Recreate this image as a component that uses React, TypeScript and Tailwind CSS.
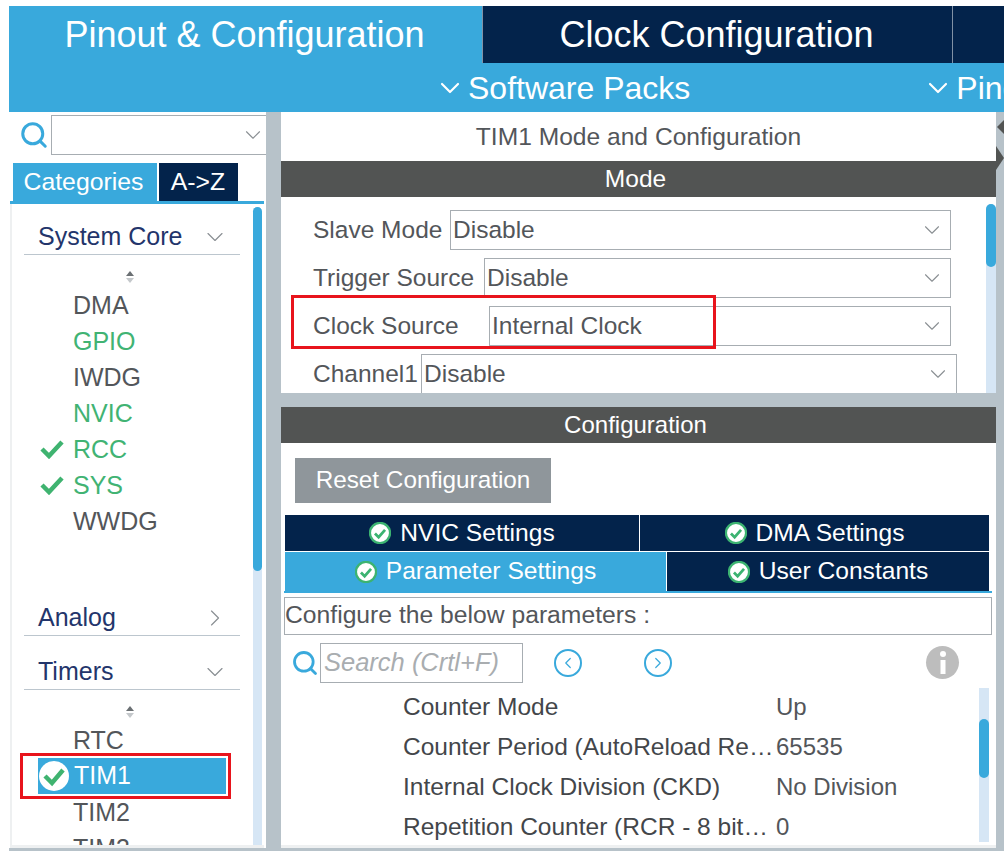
import React from 'react';
import { ChevronDown, ChevronRight, ChevronLeft, Search } from 'lucide-react';

const font = { fontFamily: '"Liberation Sans", Arial, sans-serif' };

const CheckBadge = ({ size = 20 }: { size?: number }) => (
  <svg width={size} height={size} viewBox="0 0 24 24" className="shrink-0">
    <circle cx="12" cy="12" r="11" fill="#ffffff" stroke="#3cb371" strokeWidth="2.5" />
    <path d="M6.5 12.5l4 4 7-8" fill="none" stroke="#3cb371" strokeWidth="3" />
  </svg>
);

const SortArrows = () => (
  <div className="h-[16px] ml-[8px] flex items-center justify-center w-[212px]">
    <svg width="10" height="14" viewBox="0 0 10 14">
      <path d="M5 1l4 5H1z" fill="#6b7073" />
      <path d="M5 13l4-5H1z" fill="#c4c8cb" />
    </svg>
  </div>
);

const Tick = () => (
  <svg width="24" height="20" viewBox="0 0 24 20" className="absolute left-[-33px] top-[8px]">
    <path d="M2 10l7 7L22 3" fill="none" stroke="#3fb370" strokeWidth="4.5" />
  </svg>
);

const NavItem = ({ label, green, tick }: { label: string; green?: boolean; tick?: boolean }) => (
  <div className={`relative h-[36px] ml-[57px] leading-[36px] text-[25px] ${green ? 'text-[#41b373]' : 'text-[#53565a]'}`}>
    {tick && <Tick />}
    {label}
  </div>
);

const SectionHead = ({ label, open }: { label: string; open?: boolean }) => (
  <div className="h-[36px] ml-[8px] w-[216px] flex items-center justify-between border-b border-[#bcc6ce] pr-[11px] text-[25px] text-[#23356b]">
    <span className="pl-[14px]">{label}</span>
    {open ? (
      <ChevronDown size={28} strokeWidth={1} className="text-[#8a8f93]" />
    ) : (
      <ChevronRight size={28} strokeWidth={1} className="text-[#8a8f93]" />
    )}
  </div>
);

const ModeSelect = ({ label, labelWidth, value, wide }: { label: string; labelWidth: string; value: string; wide?: boolean }) => (
  <div className={`flex items-center h-[40px] pl-[32px] text-[24.5px] text-[#53565a] ${wide ? 'pr-[29px]' : 'pr-[35px]'}`}>
    <span className={`shrink-0 ${labelWidth}`}>{label}</span>
    <div className="flex-1 h-[40px] border-[1.5px] border-[#a7adb2] flex items-center justify-between pr-[5px] pl-[2px]">
      <span>{value}</span>
      <ChevronDown size={26} strokeWidth={1} className="text-[#8a8f93]" />
    </div>
  </div>
);

const SettingTab = ({ label, active, className }: { label: string; active?: boolean; className: string }) => (
  <div className={`flex items-center justify-center gap-[9px] text-[24.6px] text-white ${active ? 'bg-[#39a9dc]' : 'bg-[#03234b]'} ${className}`}>
    <CheckBadge size={22} />
    <span>{label}</span>
  </div>
);

const ParamRow = ({ name, value }: { name: string; value: string }) => (
  <div className="flex h-[40px] items-center text-[24px] text-[#53565a]">
    <span className="w-[373px] shrink-0 whitespace-nowrap text-[24.5px] text-[#43464a]">{name}</span>
    <span>{value}</span>
  </div>
);

export default function App() {
  return (
    <div style={font} className="w-[1004px] h-[851px] bg-white overflow-hidden pt-[6px] pl-[9px] flex flex-col">
      {/* Top perspective tabs */}
      <div className="h-[106px] shrink-0 bg-[#39a9dc] text-white flex flex-col">
        <div className="h-[57px] flex text-[36px]">
          <div className="w-[473px] flex items-center justify-center pr-[2px]">Pinout &amp; Configuration</div>
          <div className="w-[470px] bg-[#03234b] border-l border-[#ffffff80] flex items-center justify-center pr-[2px]">Clock Configuration</div>
          <div className="flex-1 bg-[#03234b] border-l border-[#ffffff80]" />
        </div>
        <div className="flex-1 flex items-center text-[32px] whitespace-nowrap pl-[425px]">
          <ChevronDown size={32} strokeWidth={1.6} className="shrink-0" />
          <span className="ml-[2px]">Software Packs</span>
          <ChevronDown size={32} strokeWidth={1.6} className="ml-[232px] shrink-0" />
          <span className="ml-[2px]">Pinout</span>
        </div>
      </div>

      <div className="flex-1 min-h-0 flex">
        {/* Left panel */}
        <div className="w-[257px] shrink-0 flex flex-col pl-[1px]">
          <div className="h-[43px] flex items-center pt-[3px] pl-[9px]">
            <Search size={30} strokeWidth={2.4} className="text-[#39a9dc] shrink-0" />
            <div className="ml-[2px] flex-1 h-[40px] border-[1.5px] border-r-0 border-[#a7adb2] flex items-center justify-end">
              <ChevronDown size={26} strokeWidth={1} className="text-[#8a8f93]" />
            </div>
          </div>
          <div className="mt-[8px] flex h-[38px] pl-[3px] text-[24.8px] text-white shrink-0">
            <div className="w-[144px] bg-[#39a9dc] flex items-center justify-center pr-[3px]">Categories</div>
            <div className="w-[79px] ml-[2px] bg-[#03234b] flex items-center justify-center pr-[1px]">A-&gt;Z</div>
          </div>
          <div className="h-[3px] bg-[#39a9dc] w-[254px] shrink-0" />
          <div className="flex-1 min-h-0 w-[254px] border-l-[2px] border-b-[3px] border-[#eef0f1] flex pl-[4px] overflow-hidden">
            <div className="w-[237px] shrink-0 overflow-hidden pt-[15px]">
              <SectionHead label="System Core" open />
              <div className="mt-[14px]"><SortArrows /></div>
              <div className="mt-[2px]">
                <NavItem label="DMA" />
                <NavItem label="GPIO" green />
                <NavItem label="IWDG" />
                <NavItem label="NVIC" green />
                <NavItem label="RCC" green tick />
                <NavItem label="SYS" green tick />
                <NavItem label="WWDG" />
              </div>
              <div className="mt-[61px]"><SectionHead label="Analog" /></div>
              <div className="mt-[18px]"><SectionHead label="Timers" open /></div>
              <div className="mt-[14px]"><SortArrows /></div>
              <div className="mt-[2px]"><NavItem label="RTC" /></div>
              <div className="ml-[4px] w-[211px] h-[46px] border-[3px] border-[#e8141c] py-[2px] pl-[15px] pr-[2px] my-[-5px] relative">
                <div className="h-full bg-[#39a9dc] flex items-center text-[25px] text-white pl-[1px]">
                  <svg width="30" height="30" viewBox="0 0 30 30" className="shrink-0">
                    <circle cx="15" cy="15" r="15" fill="#ffffff" />
                    <path d="M6 15l7 7L24 9" fill="none" stroke="#3fb370" strokeWidth="4.5" />
                  </svg>
                  <span className="ml-[5px]">TIM1</span>
                </div>
              </div>
              <NavItem label="TIM2" />
              <NavItem label="TIM3" />
            </div>
            <div className="w-[9px] shrink-0 mt-[3px] bg-[#d6e6f5] rounded-t-full">
              <div className="h-[364px] bg-[#39a9dc] rounded-full" />
            </div>
          </div>
        </div>

        {/* Splitter */}
        <div className="w-[15px] shrink-0 bg-[#b7c2c9]" />

        {/* Right panel */}
        <div className="w-[715px] shrink-0 flex flex-col border-b-[3px] border-[#eef0f1]">
          <div className="h-[49px] flex items-center justify-center pt-[1px] text-[24.6px] text-[#53565a] shrink-0">TIM1 Mode and Configuration</div>
          <div className="h-[36px] bg-[#525453] text-white text-[24.5px] flex items-center justify-center pr-[6px] shrink-0">Mode</div>
          <div className="h-[196px] shrink-0 flex overflow-hidden">
            <div className="flex-1 min-w-0 flex flex-col pt-[13px] gap-[8px]">
              <ModeSelect label="Slave Mode" labelWidth="w-[137px]" value="Disable" />
              <ModeSelect label="Trigger Source" labelWidth="w-[171px]" value="Disable" />
              <div className="relative">
                <ModeSelect label="Clock Source" labelWidth="w-[176px]" value="Internal Clock" />
                <div className="absolute left-[10px] top-[-11px] w-[425px] h-[54px] border-[3px] border-[#e8141c]" />
              </div>
              <ModeSelect label="Channel1" labelWidth="w-[108px]" value="Disable" wide />
            </div>
            <div className="w-[10px] shrink-0 mt-[7px] bg-[#d6e6f5] rounded-t-full">
              <div className="h-[63px] bg-[#39a9dc] rounded-full" />
            </div>
          </div>
          <div className="h-[14px] bg-[#b7c2c9] shrink-0" />
          <div className="h-[36px] bg-[#525453] text-white text-[24px] flex items-center justify-center pr-[6px] shrink-0">Configuration</div>
          <div className="flex-1 min-h-0 flex flex-col pl-[3px] pr-[7px] pt-[15px]">
            <div className="ml-[11px] w-[256px] h-[45px] bg-[#8f969b] text-white text-[24.3px] flex items-center justify-center shrink-0">Reset Configuration</div>
            <div className="mt-[12px] w-[704px] ml-[1px] flex flex-col shrink-0">
              <div className="flex h-[36px]">
                <SettingTab label="NVIC Settings" className="w-[355px] border-r border-white" />
                <SettingTab label="DMA Settings" className="flex-1" />
              </div>
              <div className="flex h-[39px] mt-[1px]">
                <SettingTab label="Parameter Settings" active className="w-[382px] border-r border-white" />
                <SettingTab label="User Constants" className="flex-1" />
              </div>
            </div>
            <div className="h-[2px] bg-[#39a9dc] w-[708px] shrink-0" />
            <div className="mt-[4px] w-[708px] h-[38px] border border-[#a7adb2] text-[24.7px] text-[#53565a] flex items-center pb-[2px] shrink-0">Configure the below parameters :</div>
            <div className="h-[48px] flex items-center pl-[7px] mt-[4px] pb-[1px] shrink-0">
              <Search size={28} strokeWidth={2.4} className="text-[#39a9dc] shrink-0" />
              <div className="ml-[1px] w-[203px] h-[40px] border-[1.5px] border-[#a7adb2] flex items-center pl-[3px] text-[25.5px] italic text-[#a9adb0] whitespace-nowrap overflow-hidden">Search (Crtl+F)</div>
              <div className="ml-[31px] w-[28px] h-[28px] rounded-full border-[2px] border-[#39a9dc] flex items-center justify-center shrink-0">
                <ChevronLeft size={18} strokeWidth={1.6} className="text-[#39a9dc]" />
              </div>
              <div className="ml-[62px] w-[28px] h-[28px] rounded-full border-[2px] border-[#39a9dc] flex items-center justify-center shrink-0">
                <ChevronRight size={18} strokeWidth={1.6} className="text-[#39a9dc]" />
              </div>
              <div className="ml-[254px] w-[33px] h-[33px] rounded-full bg-[#bdbdbd] flex items-center justify-center shrink-0">
                <svg width="8" height="25" viewBox="0 0 8 25">
                  <circle cx="4" cy="4" r="3" fill="#ffffff" />
                  <rect x="1.5" y="10" width="5" height="14" fill="#ffffff" />
                </svg>
              </div>
            </div>
            <div className="flex-1 min-h-0 flex">
              <div className="w-[695px] shrink-0 pl-[119px]">
                <ParamRow name="Counter Mode" value="Up" />
                <ParamRow name="Counter Period (AutoReload Re…" value="65535" />
                <ParamRow name="Internal Clock Division (CKD)" value="No Division" />
                <ParamRow name="Repetition Counter (RCR - 8 bit…" value="0" />
              </div>
              <div className="w-[10px] h-[154px] mt-[1px] bg-[#d6e6f5] pt-[31px] shrink-0">
                <div className="h-[59px] bg-[#39a9dc] rounded-full" />
              </div>
            </div>
          </div>
        </div>

        {/* Right edge splitter with collapse arrows */}
        <div className="flex-1 bg-[#b7c2c9] flex flex-col items-start pt-[8px]">
          <svg width="8" height="50" viewBox="0 0 8 50">
            <path d="M8 0v14L1 7z" fill="#525453" />
            <path d="M0 26l8 12-8 12z" fill="#525453" />
          </svg>
        </div>
      </div>
      <div className="h-[3px] shrink-0 bg-[#b7c2c9]" />
    </div>
  );
}
